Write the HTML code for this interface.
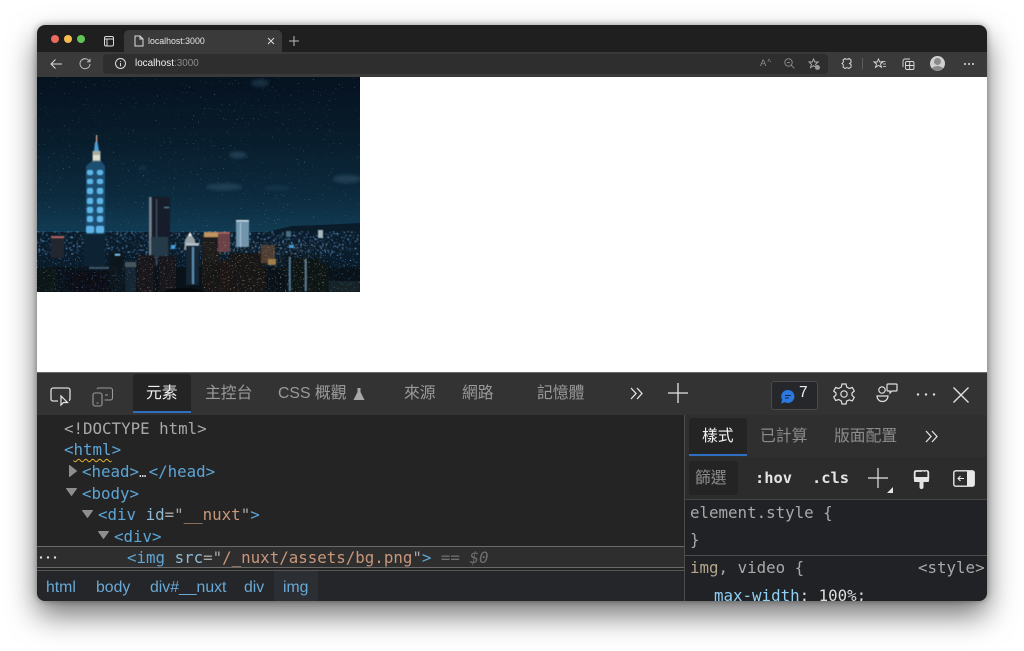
<!DOCTYPE html>
<html><head><meta charset="utf-8"><title>localhost:3000</title>
<style>
html,body{margin:0;padding:0;background:#fff;width:1024px;height:651px;overflow:hidden}
#win{position:absolute;left:37px;top:25px;width:950px;height:576px;border-radius:8px;background:#fff;box-shadow:0 14px 30px rgba(0,0,0,.55),0 0 7px rgba(0,0,0,.35)}
#clip{position:absolute;left:37px;top:25px;width:950px;height:576px;border-radius:8px;overflow:hidden;background:#fff}
.a{position:absolute}
.t{position:absolute;white-space:pre;font-family:"Liberation Sans","Noto Sans CJK TC",sans-serif}
.m{position:absolute;white-space:pre;font-family:"DejaVu Sans Mono","Liberation Mono",monospace;font-size:15.8px;line-height:20px;color:#a9a9a9}
.b{color:#5da5d6}.o{color:#c9977b}.g{color:#a9a9a9}
.cjk{font-size:15.8px;color:#9a9a9a;line-height:22px}
svg{position:absolute;overflow:visible}
.s{fill:none;stroke:#dcdcdc;stroke-width:1}
.br{font-size:15.8px;line-height:20px;color:#6aa9d6;top:553px}
</style></head><body>
<div id="win"></div>
<div id="clip">
<div class="a" style="left:0;top:0;width:950px;height:27px;background:#1f1f1f"></div>
<div class="a" style="left:0;top:27px;width:950px;height:25px;background:#3a3a3a"></div>
<div class="a" style="left:14px;top:10px;width:8px;height:8px;border-radius:50%;background:#ee6a5f"></div>
<div class="a" style="left:27px;top:10px;width:8px;height:8px;border-radius:50%;background:#f5bd4f"></div>
<div class="a" style="left:40px;top:10px;width:8px;height:8px;border-radius:50%;background:#61c454"></div>
<svg style="left:67px;top:11px" width="10" height="11"><rect x=".5" y=".5" width="9" height="9.500" rx="1.500" class="s"/><path d="M3 3v7M1 3h8" class="s"/></svg>
<div class="a" style="left:87px;top:5px;width:158px;height:22px;background:#3a3a3a;border-radius:5px 5px 0 0"></div>
<svg style="left:97px;top:10px" width="10" height="12"><path d="M1 1h5l3 3v7H1zM6 1v3h3" class="s"/></svg>
<div class="t" style="left:111px;top:9px;font-size:8.800px;line-height:14px;color:#e6e6e6">localhost:3000</div>
<svg style="left:230px;top:12px" width="8" height="8"><path d="M1 1l6 6M7 1L1 7" class="s"/></svg>
<svg style="left:252px;top:11px" width="10" height="10"><path d="M5 0v10M0 5h10" fill="none" stroke="#bbb" stroke-width="1"/></svg>
<svg style="left:13px;top:33px" width="12" height="12"><path d="M12 6H1M5.500 1.500L1 6l4.500 4.500" class="s"/></svg>
<svg style="left:42px;top:33px" width="12" height="12"><path d="M10.500 3.500A5 5 0 1 0 11 6M11 .8v3H8" fill="none" stroke="#bdbdbd" stroke-width="1"/></svg>
<div class="a" style="left:66px;top:29px;width:725px;height:20px;background:#2e2e2e;border-radius:4px"></div>
<svg style="left:78px;top:33px" width="11" height="11"><circle cx="5.500" cy="5.500" r="5" class="s"/><path d="M5.500 3v.9M5.500 5v3.200" class="s"/></svg>
<div class="t" style="left:98px;top:32px;font-size:9.900px;line-height:14px;color:#f0f0f0">localhost<span style="color:#8b8b8b">:3000</span></div>
<div class="t" style="left:723px;top:32px;font-size:9.500px;line-height:14px;color:#8c8c8c">A</div>
<svg style="left:730px;top:32px" width="6" height="6"><path d="M1 5a3 3 0 0 1 2-3M3 5a2 2 0 0 1 1-1" fill="none" stroke="#888" stroke-width=".7"/></svg>
<svg style="left:747px;top:33px" width="11" height="11"><circle cx="4.500" cy="4.500" r="3.700" fill="none" stroke="#888"/><path d="M3 4.500h3M7.300 7.300l3 3" fill="none" stroke="#888"/></svg>
<svg style="left:771px;top:33px" width="13" height="13"><path d="M5.500 1l1.400 3h3.300L7.600 6.300l1 3.300-3.100-1.900-3 1.900 1-3.300L1 4h3.200z" fill="none" stroke="#b0b0b0" stroke-width=".9"/><circle cx="9.500" cy="9.500" r="2.500" fill="#999"/></svg>
<svg style="left:804px;top:32px" width="12" height="13"><path d="M4 1.500c1 1 3 1 4 0l2 1.500v2.500l-1.500 1 1.500 1V10l-2 1.500c-1-1-3-1-4 0L2 10c.6-1 .6-2.500-1-3.500 1.600-1 1.600-2.500 1-3.500z" fill="none" stroke="#dcdcdc" stroke-width="1"/></svg>
<div class="a" style="left:825px;top:33px;width:1px;height:11px;background:#5b5b5b"></div>
<svg style="left:836px;top:33px" width="13" height="12"><path d="M5.500 1l1.300 3h3L7.500 6l1 3.300-3-1.900-3 1.900 1-3.300L1 4h3.200z" fill="none" stroke="#dcdcdc" stroke-width=".9"/><path d="M8.500 3.500h4M10 6h3M10 8.500h3" stroke="#dcdcdc" fill="none" stroke-width=".8"/></svg>
<svg style="left:865px;top:33px" width="13" height="12"><rect x="3.500" y="3.500" width="8.500" height="8" rx="1.500" fill="none" stroke="#dcdcdc" stroke-width=".9"/><path d="M7.700 4v7M4 7.500h8" stroke="#dcdcdc" stroke-width=".9"/><path d="M1 9V3a2 2 0 0 1 2-2h5" fill="none" stroke="#dcdcdc" stroke-width=".9"/></svg>
<div class="a" style="left:893px;top:31px;width:15px;height:15px;border-radius:50%;background:#cfcfcf;overflow:hidden"><div class="a" style="left:4px;top:2px;width:7px;height:7px;border-radius:50%;background:#8a8a8a"></div><div class="a" style="left:1px;top:10px;width:13px;height:9px;border-radius:50%;background:#8a8a8a"></div></div>
<svg style="left:927px;top:38px" width="10" height="2"><circle cx="1" cy="1" r="1" fill="#ddd"/><circle cx="5" cy="1" r="1" fill="#ddd"/><circle cx="9" cy="1" r="1" fill="#ddd"/></svg>

<!-- page image -->
<svg style="left:0;top:52px;overflow:hidden" width="323" height="215" viewBox="0 0 323 215">
<defs>
<linearGradient id="sky" x1="0" y1="0" x2="0" y2="1"><stop offset="0" stop-color="#061220"/><stop offset=".3" stop-color="#081d2c"/><stop offset=".55" stop-color="#0c2a3e"/><stop offset=".73" stop-color="#113c54"/></linearGradient>
<filter id="star" x="0" y="0" width="100%" height="100%" color-interpolation-filters="sRGB"><feTurbulence type="fractalNoise" baseFrequency=".8" numOctaves="1" seed="7"/><feColorMatrix values="0 0 0 0 .6  0 0 0 0 .72  0 0 0 0 .8  14 0 0 0 -10"/><feGaussianBlur stdDeviation=".3"/></filter>
<filter id="nb" x="0" y="0" width="100%" height="100%" color-interpolation-filters="sRGB"><feTurbulence type="fractalNoise" baseFrequency=".55" numOctaves="2" seed="3"/><feColorMatrix values="0 0 0 0 .42  0 0 0 0 .68  0 0 0 0 .92  10 0 0 0 -6.200"/><feGaussianBlur stdDeviation=".4"/></filter>
<filter id="nw" x="0" y="0" width="100%" height="100%" color-interpolation-filters="sRGB"><feTurbulence type="fractalNoise" baseFrequency=".6" numOctaves="2" seed="11"/><feColorMatrix values="0 0 0 0 .75  0 0 0 0 .62  0 0 0 0 .48  10 0 0 0 -6.500"/><feGaussianBlur stdDeviation=".35"/></filter>
<filter id="nc" x="0" y="0" width="100%" height="100%" color-interpolation-filters="sRGB"><feTurbulence type="fractalNoise" baseFrequency=".6" numOctaves="2" seed="21"/><feColorMatrix values="0 0 0 0 .3  0 0 0 0 .55  0 0 0 0 .8  10 0 0 0 -6.500"/><feGaussianBlur stdDeviation=".35"/></filter>
<filter id="bl"><feGaussianBlur stdDeviation=".45"/></filter><filter id="bl3"><feGaussianBlur stdDeviation="1.500"/></filter>
</defs>
<rect width="323" height="215" fill="url(#sky)"/>
<rect width="323" height="150" filter="url(#star)" opacity=".6"/>
<g filter="url(#bl3)" fill="#2a4a5e" opacity=".7"><ellipse cx="201" cy="78" rx="9" ry="3.500"/><ellipse cx="187" cy="110" rx="18" ry="3.500"/><ellipse cx="310" cy="102" rx="14" ry="4"/><ellipse cx="240" cy="111" rx="13" ry="2.500" opacity=".5"/><ellipse cx="223" cy="6" rx="9" ry="4" opacity=".7"/><ellipse cx="106" cy="91" rx="4" ry="2.500" opacity=".5"/></g>
<!-- city base -->
<path d="M0 155h230l25-6 30-1 38-2v69H0z" fill="#0a1b29"/>
<rect y="154" width="323" height="24" filter="url(#nb)"/>
<rect y="178" width="323" height="14" filter="url(#nc)" opacity=".8"/>
<rect y="190" width="323" height="25" fill="#090f15" opacity=".8"/>
<g filter="url(#bl)">
<!-- Taipei 101 -->
<rect x="59" y="58" width="1.200" height="7" fill="#e8b8a0"/>
<path d="M58 65h2.500l1.500 9h-5z" fill="#4aa0d8"/>
<rect x="55.500" y="74" width="8" height="10" fill="#a8ad9e"/><rect x="56" y="78" width="7" height="5" fill="#dcdfd0"/>
<path d="M55 84h9l4 5v68H49V89z" fill="#1e4f72"/>
<g fill="#5cb4e8"><rect x="50" y="93" width="6" height="5" rx="2"/><rect x="60" y="93" width="6" height="5" rx="2"/><rect x="50" y="102" width="6" height="5" rx="2"/><rect x="60" y="102" width="6" height="5" rx="2"/><rect x="50" y="111" width="6" height="6" rx="2"/><rect x="60" y="111" width="6" height="6" rx="2"/><rect x="50" y="121" width="6" height="6" rx="2"/><rect x="60" y="121" width="6" height="6" rx="2"/><rect x="50" y="130" width="6" height="6" rx="2"/><rect x="60" y="130" width="6" height="6" rx="2"/><rect x="50" y="139" width="6" height="6" rx="2"/><rect x="60" y="139" width="6" height="6" rx="2"/><rect x="49" y="149" width="8" height="7" rx="2"/><rect x="59" y="149" width="8" height="7" rx="2"/></g>
<rect x="47" y="157" width="21" height="32" fill="#0e2232"/>
<!-- Tall tower -->
<rect x="112" y="120" width="21" height="68" fill="#121f2a"/>
<rect x="112" y="120" width="2.500" height="68" fill="#76838e"/><rect x="119" y="122" width="1.200" height="66" fill="#3f505e"/><rect x="127" y="130" width="5" height="1" fill="#5b7d98"/><rect x="114" y="160" width="17" height="20" fill="#263a4a"/>
<!-- center white tip -->
<path d="M148 163l5-8 5 8 1 10h-12z" fill="#99a4a8"/><path d="M151 159l2-4 2 4z" fill="#eef0ee"/>
<rect x="149" y="166" width="13" height="42" fill="#122636"/><rect x="149" y="166" width="13" height="2.500" fill="#b4c2cc"/><rect x="155" y="170" width="2" height="37" fill="#5a8cb0"/>
<!-- amber -->
<rect x="165" y="158" width="18" height="30" fill="#1e1a1c"/><rect x="167" y="155" width="15" height="5" fill="#c09460"/>
<rect x="181" y="155" width="12" height="20" fill="#6c4348"/><rect x="181" y="155" width="12" height="1.500" fill="#b86a5e"/>
<!-- light blue -->
<rect x="199" y="143" width="13" height="27" fill="#6f95ac"/><rect x="199" y="143" width="13" height="1.500" fill="#d0dee6"/><rect x="203" y="146" width="1" height="24" fill="#a8c4d6"/>
<rect x="281" y="153" width="5" height="8" fill="#a8b8c0"/><rect x="249" y="154" width="5" height="6" fill="#4a6c80"/>
<!-- left -->
<rect x="14" y="159" width="13" height="22" fill="#23272f"/><rect x="14" y="159" width="13" height="2" fill="#a8605a"/>
<rect x="73" y="175" width="14" height="40" fill="#08131c"/><rect x="78" y="177" width="5" height="1.500" fill="#7ec0e8"/>
<rect x="88" y="185" width="11" height="30" fill="#172531"/><rect x="88" y="185" width="11" height="5" fill="#46565f"/>
<rect x="100" y="178" width="17" height="37" fill="#12181f"/>
<rect x="122" y="179" width="17" height="36" fill="#19171b"/>
<rect x="0" y="190" width="20" height="25" fill="#0c1218"/><rect x="30" y="195" width="40" height="20" fill="#080d12"/><rect x="52" y="190" width="20" height="2" fill="#3f5a6c"/>
<!-- foreground -->
<rect x="165" y="185" width="18" height="30" fill="#181618"/>
<rect x="183" y="183" width="14" height="32" fill="#1b1818"/>
<rect x="193" y="176" width="35" height="39" fill="#151414"/>
<rect x="224" y="168" width="14" height="18" fill="#4e3e32"/><rect x="231" y="182" width="8" height="6" fill="#a07c4a"/>
<rect x="248" y="177" width="8" height="38" fill="#0c141b"/><rect x="252" y="180" width="1.500" height="34" fill="#4e7c98"/>
<rect x="256" y="181" width="26" height="34" fill="#0f1318"/><rect x="268" y="182" width="1.500" height="32" fill="#5c8298"/>
<rect x="282" y="186" width="10" height="29" fill="#0e1318"/><rect x="292" y="204" width="31" height="11" fill="#182027"/>
<rect x="252" y="168" width="5" height="3" fill="#4aa0e0"/>
<rect x="134" y="168" width="4" height="4" fill="#4aa0e0"/>
</g>
<rect x="100" y="178" width="39" height="37" filter="url(#nw)" opacity=".55"/>
<rect x="165" y="165" width="125" height="50" filter="url(#nw)" opacity=".55"/>
<rect x="0" y="190" width="100" height="25" filter="url(#nc)" opacity=".55"/>
<rect x="290" y="180" width="33" height="35" filter="url(#nc)" opacity=".5"/>
<ellipse cx="147" cy="216" rx="22" ry="5" fill="#070a0c"/>
</svg>

<!-- devtools -->
<div class="a" style="left:0;top:347px;width:950px;height:1px;background:#6a6a6a"></div>
<div class="a" style="left:0;top:348px;width:950px;height:42px;background:#333"></div>
<div class="a" style="left:0;top:390px;width:950px;height:186px;background:#242424"></div>
<svg style="left:13px;top:362px" width="22" height="19"><path d="M8 14H3a2 2 0 0 1-2-2V3a2 2 0 0 1 2-2h15a2 2 0 0 1 2 2v9a2 2 0 0 1-1 1.500" class="s" style="stroke-width:1.300"/><path d="M11 9v9l2.500-2.500h4z" fill="#333" stroke="#e8e8e8" stroke-width="1.200"/></svg>
<svg style="left:55px;top:362px" width="22" height="20"><rect x="1" y="6" width="9" height="13" rx="2" fill="none" stroke="#9a9a9a" stroke-width="1.100"/><path d="M5 2a1.500 1.500 0 0 1 1.500-1h12a2 2 0 0 1 2 2v8a2 2 0 0 1-2 2h-6M13 8h3M4.500 16h2" fill="none" stroke="#9a9a9a" stroke-width="1.100"/></svg>
<div class="a" style="left:96px;top:349px;width:58px;height:39px;background:#242424;border-radius:3px 3px 0 0"></div>
<div class="a" style="left:96px;top:386px;width:58px;height:2px;background:#2f6fc0"></div>
<div class="t cjk" style="left:109px;top:358px;color:#f0f0f0">元素</div>
<div class="t cjk" style="left:168px;top:358px">主控台</div>
<div class="t cjk" style="left:241px;top:358px">CSS 概觀</div>
<svg style="left:315px;top:362px" width="14" height="14"><path d="M4.500 1h5M5.500 1v4L1.500 13h11l-4-8V1z" fill="#a8a8a8"/></svg>
<div class="t cjk" style="left:367px;top:358px">來源</div>
<div class="t cjk" style="left:425px;top:358px">網路</div>
<div class="t cjk" style="left:500px;top:358px">記憶體</div>
<svg style="left:593px;top:362px" width="13" height="13"><path d="M1 1l5 5.500L1 12M7 1l5 5.500L7 12" fill="none" stroke="#e4e4e4" stroke-width="1.300"/></svg>
<svg style="left:631px;top:358px" width="20" height="20"><path d="M10 0v20M0 10h20" fill="none" stroke="#e4e4e4" stroke-width="1.300"/></svg>
<div class="a" style="left:734px;top:356px;width:45px;height:27px;background:#25272a;border:1px solid #4a4a4a;border-radius:3px"></div>
<svg style="left:744px;top:365px" width="14" height="14"><path d="M7 0a6.500 6.500 0 1 1-3 12.300L0 13.500l1.200-3.700A6.500 6.500 0 0 1 7 0z" fill="#2b78e0"/><path d="M4 5.500h6M4 8h4" stroke="#1b2a44" stroke-width="1"/></svg>
<div class="t" style="left:762px;top:358px;font-size:15.500px;line-height:20px;color:#ececec">7</div>
<svg style="left:796px;top:358px" width="22" height="22"><path d="M9 1h4l.7 3 2.600 1.500 3-1 2 3.500-2.300 2v2.400l2.300 2-2 3.500-3-1L13.700 18l-.7 3H9l-.7-3-2.600-1.500-3 1-2-3.500 2.300-2V10L.7 8l2-3.500 3 1L8.300 4z" fill="none" stroke="#e0e0e0" stroke-width="1.200"/><circle cx="11" cy="11" r="3.200" fill="none" stroke="#e0e0e0" stroke-width="1.200"/></svg>
<svg style="left:839px;top:358px" width="22" height="22"><circle cx="6" cy="7" r="3.200" fill="none" stroke="#e0e0e0" stroke-width="1.200"/><path d="M1 13h11a5.500 5.500 0 0 1-11 0z" fill="none" stroke="#e0e0e0" stroke-width="1.200"/><path d="M11 2a1 1 0 0 1 1-1h8a1 1 0 0 1 1 1v5a1 1 0 0 1-1 1h-4l-2 2V8h-2a1 1 0 0 1-1-1z" fill="none" stroke="#e0e0e0" stroke-width="1.200"/></svg>
<svg style="left:879px;top:368px" width="20" height="3"><circle cx="2" cy="1.500" r="1.200" fill="#e0e0e0"/><circle cx="10" cy="1.500" r="1.200" fill="#e0e0e0"/><circle cx="18" cy="1.500" r="1.200" fill="#e0e0e0"/></svg>
<svg style="left:916px;top:362px" width="16" height="16"><path d="M.5.500l15 15M15.500.500l-15 15" fill="none" stroke="#e4e4e4" stroke-width="1.300"/></svg>

<!-- dom tree -->
<div class="m" style="left:27px;top:394px">&lt;!DOCTYPE html&gt;</div>
<div class="m" style="left:27px;top:415px"><span class="b">&lt;</span><span class="b" style="text-decoration:underline wavy #e0b030 1px;text-underline-offset:3px">html</span><span class="b">&gt;</span></div>
<svg style="left:32px;top:440px" width="8" height="12"><path d="M.5.500l7 5.500-7 5.500z" fill="#8e8e8e" stroke="#8e8e8e" stroke-linejoin="round"/></svg>
<div class="m" style="left:45px;top:437px"><span class="b">&lt;head&gt;</span><span style="display:inline-block;width:9.500px;color:#ddd;font-size:12px;letter-spacing:-.5px">…</span><span class="b">&lt;/head&gt;</span></div>
<svg style="left:29px;top:463px" width="11" height="8"><path d="M.5.500h10l-5 7z" fill="#8e8e8e" stroke="#8e8e8e" stroke-linejoin="round"/></svg>
<div class="m" style="left:45px;top:459px"><span class="b">&lt;body&gt;</span></div>
<svg style="left:45px;top:485px" width="11" height="8"><path d="M.5.500h10l-5 7z" fill="#8e8e8e" stroke="#8e8e8e" stroke-linejoin="round"/></svg>
<div class="m" style="left:61px;top:480px"><span class="b">&lt;div </span><span style="color:#8fb8d4">id</span><span class="g">="</span><span class="o">__nuxt</span><span class="g">"</span><span class="b">&gt;</span></div>
<svg style="left:61px;top:506px" width="11" height="8"><path d="M.5.500h10l-5 7z" fill="#8e8e8e" stroke="#8e8e8e" stroke-linejoin="round"/></svg>
<div class="m" style="left:77px;top:502px"><span class="b">&lt;div&gt;</span></div>
<div class="a" style="left:0;top:521px;width:647px;height:22px;background:#2e2e2e;border-top:1px solid #6a6a6a;border-bottom:1px solid #6a6a6a;box-sizing:border-box"></div>
<div class="a" style="left:0;top:545px;width:647px;height:1px;background:#555"></div>
<svg style="left:2px;top:531px" width="20" height="3"><circle cx="2" cy="1.500" r="1.200" fill="#ddd"/><circle cx="9" cy="1.500" r="1.200" fill="#ddd"/><circle cx="16" cy="1.500" r="1.200" fill="#ddd"/></svg>
<div class="m" style="left:90px;top:523px"><span class="b">&lt;img </span><span style="color:#8fb8d4">src</span><span class="g">="</span><span class="o">/_nuxt/assets/bg.png</span><span class="g">"</span><span class="b">&gt;</span><span style="color:#6e6e6e"> == <i>$0</i></span></div>
<!-- breadcrumbs -->
<div class="a" style="left:0;top:546px;width:647px;height:30px;background:#24262a"></div>
<div class="a" style="left:237px;top:546px;width:44px;height:30px;background:#2b2e33"></div>
<div class="t br" style="left:9px">html</div>
<div class="t br" style="left:59px">body</div>
<div class="t br" style="left:113px">div#__nuxt</div>
<div class="t br" style="left:207px">div</div>
<div class="t br" style="left:246px">img</div>

<!-- right panel -->
<div class="a" style="left:647px;top:390px;width:303px;height:186px;background:#212226"></div>
<div class="a" style="left:647px;top:390px;width:1px;height:186px;background:#4d4d4d"></div>
<div class="a" style="left:648px;top:390px;width:302px;height:42px;background:#2f2f2f"></div>
<div class="a" style="left:652px;top:393px;width:58px;height:37px;background:#242424;border-radius:3px 3px 0 0"></div>
<div class="a" style="left:652px;top:429px;width:58px;height:2px;background:#2f6fc0"></div>
<div class="t cjk" style="left:665px;top:401px;color:#f0f0f0">樣式</div>
<div class="t cjk" style="left:723px;top:401px;color:#8c8c8c">已計算</div>
<div class="t cjk" style="left:797px;top:401px;color:#8c8c8c">版面配置</div>
<svg style="left:888px;top:405px" width="14" height="13"><path d="M1 1l5 5.500L1 12M7 1l5 5.500L7 12" fill="none" stroke="#e0e0e0" stroke-width="1.300"/></svg>
<div class="a" style="left:648px;top:432px;width:302px;height:42px;background:#2c2c2c"></div>
<div class="a" style="left:652px;top:436px;width:49px;height:34px;background:#242424;border-radius:3px"></div>
<div class="t cjk" style="left:658px;top:443px;color:#8c8c8c">篩選</div>
<div class="m" style="left:718px;top:443px;font-weight:bold;font-size:15.400px;color:#e4e4e4">:hov</div>
<div class="m" style="left:775px;top:443px;font-weight:bold;font-size:15.400px;color:#e4e4e4">.cls</div>
<svg style="left:831px;top:443px" width="26" height="26"><path d="M10 0v20M0 10h20" fill="none" stroke="#e4e4e4" stroke-width="1.200"/><path d="M25 19v6h-6z" fill="#e4e4e4"/></svg>
<svg style="left:876px;top:445px" width="17" height="19"><rect x="1.700" y="1" width="13.600" height="9" rx="1.500" fill="none" stroke="#e4e4e4" stroke-width="1.800"/><rect x="1" y="7" width="15" height="5" rx="1" fill="#e4e4e4"/><path d="M6.500 12h4v5a2 2 0 0 1-4 0z" fill="#e4e4e4"/><path d="M10 1v3M13 1v3" stroke="#2c2c2c" stroke-width="1"/></svg>
<svg style="left:916px;top:445px" width="22" height="17"><rect x=".8" y=".8" width="20.400" height="15.400" rx="2" fill="none" stroke="#e8e8e8" stroke-width="1.400"/><rect x="14" y="1" width="7" height="15" fill="#e8e8e8"/><path d="M11 8.500H5M7.500 6L5 8.500 7.500 11" fill="none" stroke="#e8e8e8" stroke-width="1.100"/></svg>
<div class="a" style="left:648px;top:474px;width:302px;height:1px;background:#454545"></div>
<div class="m" style="left:653px;top:478px">element.style {</div>
<div class="m" style="left:653px;top:505px">}</div>
<div class="a" style="left:648px;top:530px;width:302px;height:1px;background:#4d4d4d"></div>
<div class="m" style="left:653px;top:533px"><span style="color:#b3a68c">img</span>, video {</div>
<div class="m" style="left:881px;top:533px">&lt;style&gt;</div>
<div class="m" style="left:677px;top:561px;color:#ddd"><span style="color:#8fd0f5">max-width</span>: 100%;</div>
</div>
</body></html>
